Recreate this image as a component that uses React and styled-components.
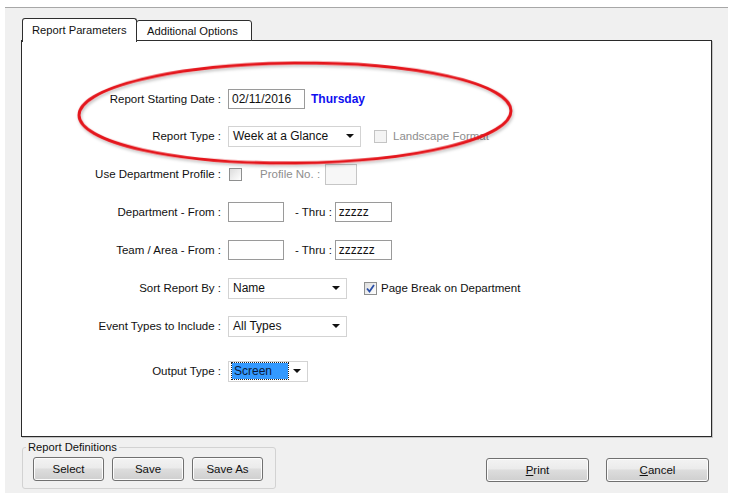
import React from 'react';
import styled, { createGlobalStyle } from 'styled-components';

const GlobalStyle = createGlobalStyle`
	html, body {
		margin: 0;
		padding: 0;
		background: #ffffff;
		font-family: "Liberation Sans", Arial, sans-serif;
		font-size: 11.5px;
		color: #111;
	}
	* {
		box-sizing: border-box;
	}
`;

const Page = styled.div`
	position: relative;
	width: 729px;
	height: 504px;
	overflow: hidden;
`;

const Window = styled.div`
	width: 723px;
	height: 486px;
	margin: 7px 0 0 5px;
	background: #f0f0f0;
	border-top: 1px solid #a7a7a7;
	padding: 10px 0 0 16px;
`;

const TabStrip = styled.div`
	display: flex;
	align-items: flex-end;
	height: 23px;
	padding-left: 1px;
	position: relative;
	z-index: 1;
`;

const Tab = styled.div`
	display: flex;
	align-items: center;
	width: ${(p) => (p.$active ? '115px' : '116px')};
	height: ${(p) => (p.$active ? '24px' : '21px')};
	margin-left: ${(p) => (p.$active ? '0' : '-1px')};
	margin-bottom: ${(p) => (p.$active ? '-1px' : '0')};
	padding: ${(p) => (p.$active ? '0 0 2px 9px' : '0 0 0 10px')};
	background: #ffffff;
	border: 1px solid #2e2e2e;
	border-bottom: ${(p) => (p.$active ? 'none' : '1px solid #2e2e2e')};
	border-radius: 3px 3px 0 0;
	font-size: 11.2px;
	white-space: nowrap;
`;

const Panel = styled.div`
	width: 691px;
	height: 397px;
	margin-top: -1px;
	background: #ffffff;
	border: 1px solid #2a2a2a;
	box-shadow: 1px 1px 0 #c4c4c4;
`;

const Form = styled.div`
	display: flex;
	flex-direction: column;
	gap: 18px;
	padding-top: 48px;
`;

const Row = styled.div`
	display: flex;
	align-items: center;
	height: 20px;
	margin-top: ${(p) => p.$offset || 0}px;
`;

const Label = styled.div`
	width: 199px;
	margin-right: 7px;
	text-align: right;
	white-space: nowrap;
`;

const Text = styled.span`
	margin-left: ${(p) => p.$gap || 0}px;
	color: ${(p) => (p.$disabled ? '#8e8e8e' : '#111')};
	white-space: nowrap;
`;

const DayName = styled.span`
	margin-left: 6px;
	color: #1010f0;
	font-weight: bold;
	font-size: 12px;
`;

const Input = styled.div`
	display: flex;
	align-items: center;
	width: ${(p) => p.$w}px;
	height: ${(p) => p.$h || 20}px;
	margin-left: ${(p) => p.$gap || 0}px;
	padding-left: 3px;
	background: ${(p) => (p.$disabled ? '#f7f7f7' : '#ffffff')};
	border: 1px solid ${(p) => (p.$disabled ? '#c6c6c6' : '#9a9a9a')};
	font-size: 12px;
`;

const Select = styled.div`
	display: flex;
	align-items: center;
	justify-content: space-between;
	width: ${(p) => p.$w}px;
	height: 21px;
	padding: 0 6px 0 4px;
	background: #ffffff;
	border: 1px solid #d3d3d3;
	font-size: 12px;
`;

const Arrow = styled.span`
	width: 0;
	height: 0;
	border-left: 4px solid transparent;
	border-right: 4px solid transparent;
	border-top: 4px solid #111;
`;

const Selected = styled.span`
	display: flex;
	align-items: center;
	width: 56px;
	height: 16px;
	margin-left: -1px;
	padding-left: 2px;
	background: #3399ff;
	outline: 1px dotted #222;
	color: #0a1a3a;
`;

const Check = styled.span`
	display: inline-flex;
	align-items: center;
	justify-content: center;
	width: 13px;
	height: 13px;
	margin-left: ${(p) => p.$gap || 0}px;
	border: 1px solid ${(p) => (p.$disabled ? '#c4c4c4' : '#8e8f8f')};
	background: ${(p) =>
		p.$disabled ? '#f4f4f4' : 'linear-gradient(135deg, #dcdcdc 0%, #ffffff 100%)'};
`;

const Footer = styled.div`
	display: flex;
	justify-content: space-between;
	align-items: flex-start;
	width: 691px;
	margin-top: 4px;
	padding-right: 3px;
`;

const GroupBox = styled.fieldset`
	width: 254px;
	height: 48px;
	margin: 0 0 0 1px;
	padding: 3px 10px 0 10px;
	border: 1px solid #d2d2d2;
	border-radius: 3px;
	display: flex;
	gap: 8px;

	legend {
		margin-left: -7px;
		padding: 0 2px;
		font-size: 11.2px;
		line-height: 13px;
	}
`;

const Button = styled.button`
	width: ${(p) => p.$w}px;
	height: 24px;
	padding: 0;
	font-family: "Liberation Sans", Arial, sans-serif;
	font-size: 11.5px;
	color: #111;
	border: 1px solid #707070;
	border-radius: 3px;
	background: linear-gradient(to bottom, #f3f3f3 0%, #ebebeb 45%, #dddddd 50%, #cfcfcf 100%);
	box-shadow: inset 0 0 0 1px #fcfcfc;

	u {
		text-decoration: underline;
	}
`;

const Actions = styled.div`
	display: flex;
	gap: 17px;
	margin-top: 17px;
`;

const Highlight = styled.svg`
	position: absolute;
	left: 0;
	top: 0;
	pointer-events: none;
`;

const CheckMark = () => (
	<svg width="9" height="9" viewBox="0 0 9 9">
		<path d="M1 4.5 L3.5 7.5 L8 1" fill="none" stroke="#2a4fa8" strokeWidth="1.8" />
	</svg>
);

export default function App() {
	return (
		<Page>
			<GlobalStyle />
			<Window>
				<TabStrip>
					<Tab $active>Report Parameters</Tab>
					<Tab>Additional Options</Tab>
				</TabStrip>
				<Panel>
					<Form>
						<Row>
							<Label>Report Starting Date :</Label>
							<Input $w={77}>02/11/2016</Input>
							<DayName>Thursday</DayName>
						</Row>
						<Row $offset={-1}>
							<Label>Report Type :</Label>
							<Select $w={133}>
								Week at a Glance
								<Arrow />
							</Select>
							<Check $gap={13} $disabled />
							<Text $gap={6} $disabled>
								Landscape Format
							</Text>
						</Row>
						<Row>
							<Label>Use Department Profile :</Label>
							<Check $gap={1} />
							<Text $gap={18} $disabled>
								Profile No. :
							</Text>
							<Input $w={32} $h={21} $gap={5} $disabled />
						</Row>
						<Row>
							<Label>Department - From :</Label>
							<Input $w={56} />
							<Text $gap={11}>- Thru :</Text>
							<Input $w={57} $gap={3}>
								zzzzz
							</Input>
						</Row>
						<Row>
							<Label>Team / Area - From :</Label>
							<Input $w={56} />
							<Text $gap={11}>- Thru :</Text>
							<Input $w={57} $gap={3}>
								zzzzzz
							</Input>
						</Row>
						<Row>
							<Label>Sort Report By :</Label>
							<Select $w={119}>
								Name
								<Arrow />
							</Select>
							<Check $gap={17}>
								<CheckMark />
							</Check>
							<Text $gap={4}>Page Break on Department</Text>
						</Row>
						<Row>
							<Label>Event Types to Include :</Label>
							<Select $w={119}>
								All Types
								<Arrow />
							</Select>
						</Row>
						<Row $offset={7}>
							<Label>Output Type :</Label>
							<Select $w={80}>
								<Selected>Screen</Selected>
								<Arrow />
							</Select>
						</Row>
					</Form>
				</Panel>
				<Footer>
					<GroupBox>
						<legend>Report Definitions</legend>
						<Button $w={71}>Select</Button>
						<Button $w={72}>Save</Button>
						<Button $w={71}>Save As</Button>
					</GroupBox>
					<Actions>
						<Button $w={103}>
							<u>P</u>rint
						</Button>
						<Button $w={103}>
							<u>C</u>ancel
						</Button>
					</Actions>
				</Footer>
			</Window>
			<Highlight width="729" height="504" viewBox="0 0 729 504">
				<defs>
					<filter id="soft" x="-10%" y="-20%" width="120%" height="150%">
						<feDropShadow dx="1" dy="2" stdDeviation="1.5" floodColor="#000" floodOpacity="0.25" />
					</filter>
				</defs>
				<ellipse
					cx="295"
					cy="113"
					rx="216"
					ry="50"
					transform="rotate(-0.6 295 113)"
					fill="none"
					stroke="#e4141b"
					strokeWidth="3"
					filter="url(#soft)"
				/>
			</Highlight>
		</Page>
	);
}
